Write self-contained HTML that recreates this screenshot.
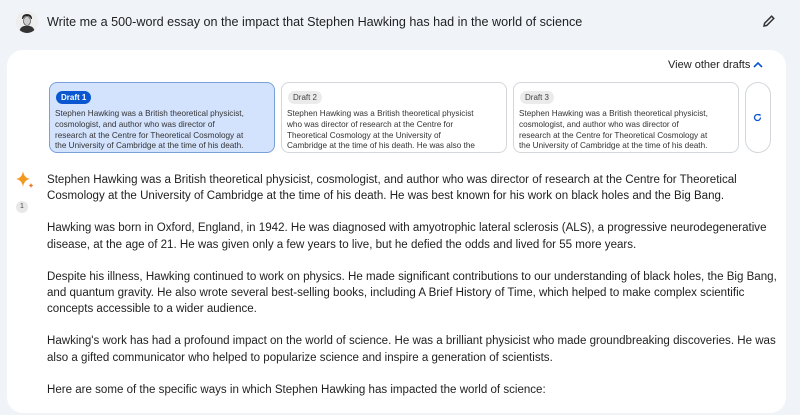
<!DOCTYPE html>
<html><head><style>
html,body{margin:0;width:800px;height:415px;overflow:hidden}
body{background:#f0f4f9;font-family:"Liberation Sans",sans-serif;color:#1f1f1f;position:relative}
.av{position:absolute;left:16px;top:11px;width:22px;height:22px;border-radius:50%;background:#ddd;overflow:hidden}
.q{position:absolute;left:47px;top:15px;font-size:12.6px;color:#1f1f1f;white-space:nowrap}
.card{position:absolute;left:7px;top:50px;width:779px;height:363px;background:#fff;border-radius:16px}
.vod{position:absolute;left:668px;top:59px;font-size:11px;color:#1f1f1f}
.d{position:absolute;top:82px;width:226px;height:71px;border:1px solid #d3d6da;border-radius:8px;box-sizing:border-box;background:#fff;overflow:hidden}
.d.a{background:#d3e3fd;border-color:#7aa0d8}
.b{position:absolute;left:6px;top:8px;font-size:8px;padding:2px 5px;border-radius:8px;background:#ebebeb;color:#444}
.a .b{background:#0b57d0;color:#fff;font-weight:bold}
.dt{position:absolute;left:5px;top:26px;font-size:8.2px;line-height:10.8px;color:#333;white-space:nowrap}
.main{position:absolute;left:47px;top:172px;font-size:11.55px;line-height:16.2px;color:#1f1f1f;white-space:nowrap}
.main p{margin:0 0 16px}
</style></head><body>
<div class="av"><svg width="22" height="22"><rect width="22" height="22" fill="#eee"/><path d="M6 8 Q6 3 11 3 Q16 3 16 8 L15 8 Q14 5 11 5 Q8 5 7 8Z" fill="#222"/><ellipse cx="11" cy="10" rx="3.5" ry="4.5" fill="#ccc" stroke="#333" stroke-width="0.6"/><path d="M3 22 Q4 14 11 15 Q18 14 19 22Z" fill="#333"/></svg></div>
<div class="q">Write me a 500-word essay on the impact that Stephen Hawking has had in the world of science</div>
<svg style="position:absolute;left:762px;top:14px" width="14" height="14" viewBox="0 0 14 14"><path d="M2 12 L2.6 9.2 L9.6 2.2 L11.8 4.4 L4.8 11.4 Z" fill="none" stroke="#333" stroke-width="1.5"/></svg>
<div class="card"></div>
<div class="vod">View other drafts</div>
<svg style="position:absolute;left:753px;top:61px" width="10" height="7"><path d="M1 6 L5 2 L9 6" fill="none" stroke="#0b57d0" stroke-width="1.6"/></svg>
<div class="d a" style="left:49px"><span class="b">Draft 1</span><div class="dt">Stephen Hawking was a British theoretical physicist,<br>cosmologist, and author who was director of<br>research at the Centre for Theoretical Cosmology at<br>the University of Cambridge at the time of his death.</div></div>
<div class="d" style="left:281px"><span class="b">Draft 2</span><div class="dt">Stephen Hawking was a British theoretical physicist<br>who was director of research at the Centre for<br>Theoretical Cosmology at the University of<br>Cambridge at the time of his death. He was also the</div></div>
<div class="d" style="left:513px"><span class="b">Draft 3</span><div class="dt">Stephen Hawking was a British theoretical physicist,<br>cosmologist, and author who was director of<br>research at the Centre for Theoretical Cosmology at<br>the University of Cambridge at the time of his death.</div></div>
<div class="d" style="left:745px;width:26px;border-radius:13px"></div>
<svg style="position:absolute;left:753px;top:113px" width="9" height="9" viewBox="0 0 9 9"><path d="M7.5 4.5 A3 3 0 1 1 6.4 2.2" fill="none" stroke="#0b57d0" stroke-width="1.3"/><path d="M5 1 L7.5 1 L7.5 3.5Z" fill="#0b57d0"/></svg>
<svg style="position:absolute;left:15px;top:170px" width="20" height="20" viewBox="0 0 20 20"><path d="M8 1 Q9 8 15 9 Q9 10 8 17 Q7 10 1 9 Q7 8 8 1Z" fill="#f29a1f"/><path d="M16 13 Q16.5 15 18.5 15.5 Q16.5 16 16 18 Q15.5 16 13.5 15.5 Q15.5 15 16 13Z" fill="#ef7a2a"/></svg>
<div style="position:absolute;left:16px;top:201px;width:12px;height:12px;border-radius:50%;background:#e8e8e8;font-size:7px;text-align:center;line-height:12px;color:#444">1</div>
<div class="main">
<p>Stephen Hawking was a British theoretical physicist, cosmologist, and author who was director of research at the Centre for Theoretical<br>Cosmology at the University of Cambridge at the time of his death. He was best known for his work on black holes and the Big Bang.</p>
<p>Hawking was born in Oxford, England, in 1942. He was diagnosed with amyotrophic lateral sclerosis (ALS), a progressive neurodegenerative<br>disease, at the age of 21. He was given only a few years to live, but he defied the odds and lived for 55 more years.</p>
<p>Despite his illness, Hawking continued to work on physics. He made significant contributions to our understanding of black holes, the Big Bang,<br>and quantum gravity. He also wrote several best-selling books, including A Brief History of Time, which helped to make complex scientific<br>concepts accessible to a wider audience.</p>
<p>Hawking's work has had a profound impact on the world of science. He was a brilliant physicist who made groundbreaking discoveries. He was<br>also a gifted communicator who helped to popularize science and inspire a generation of scientists.</p>
<p>Here are some of the specific ways in which Stephen Hawking has impacted the world of science:</p>
</div>
</body></html>
